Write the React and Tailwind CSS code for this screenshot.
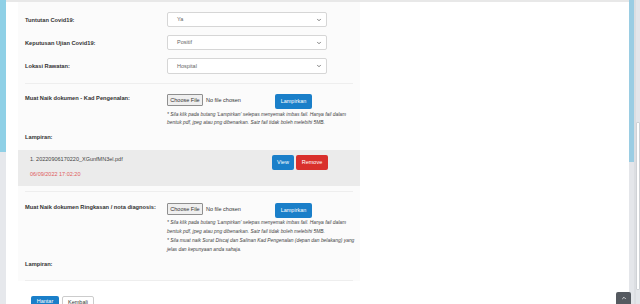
import { ChevronDown, ChevronUp } from 'lucide-react';

const Select = ({ value, className = '' }) => (
  <div
    className={`flex w-[160px] items-center justify-between rounded-[2px] border border-[#d6d6d6] bg-white pl-[9px] pr-[4px] text-[5.5px] text-[#666] ${className}`}
  >
    <span>{value}</span>
    <ChevronDown size={6} strokeWidth={3} className="text-[#555]" />
  </div>
);

const FileInput = () => (
  <div className="flex w-[108px] items-center gap-[3px] text-[5.5px] text-[#333]">
    <span className="flex h-[12px] w-[36px] items-center justify-center rounded-[1px] border border-[#8f8f8f] bg-[#efefef]">
      Choose File
    </span>
    <span>No file chosen</span>
  </div>
);

const Btn = ({ children, className = '' }) => (
  <span
    className={`flex items-center justify-center rounded-[2px] text-[5.5px] text-white ${className}`}
  >
    {children}
  </span>
);

const Help = ({ lines }) => (
  <div className="mt-[1.5px] whitespace-nowrap text-[4.9px] italic leading-[8.7px] text-[#444]">
    {lines.map((l) => (
      <div key={l}>{l}</div>
    ))}
  </div>
);

const Label = ({ children, className = '' }) => (
  <div className={`w-[142px] shrink-0 text-[5.7px] font-bold leading-[8px] text-[#333] ${className}`}>
    {children}
  </div>
);

const help1 = [
  "* Sila klik pada butang 'Lampirkan' selepas menyemak imbas fail. Hanya fail dalam",
  'bentuk pdf, jpeg atau png dibenarkan. Saiz fail tidak boleh melebihi 5MB.',
];

const help2 = [
  ...help1,
  '* Sila muat naik Surat Discaj dan Salinan Kad Pengenalan (depan dan belakang) yang',
  'jelas dan kepunyaan anda sahaja.',
];

const UploadRow = ({ label, lines }) => (
  <div className="flex">
    <Label>{label}</Label>
    <div>
      <div className="flex h-[15px] items-start">
        <FileInput />
        <Btn className="h-[15px] w-[37px] bg-[#1a7fc9]">Lampirkan</Btn>
      </div>
      <Help lines={lines} />
    </div>
  </div>
);

export default function App() {
  return (
    <div className="relative flex h-[304px] w-[640px] overflow-hidden bg-[#eceef2] font-['Liberation_Sans',Arial,sans-serif]">
      <div className="flex w-[6px] flex-col">
        <div className="h-[152px] bg-[#8fd0e6]" />
        <div className="flex-1 bg-[#e6e8ec]" />
      </div>

      <main className="flex-1 border-t-2 border-[#e8e8e8] bg-white">
        <div className="ml-[12px] w-[342px] bg-[#fbfbfb] px-[7px]">
          <div className="ml-[142px] h-[2px] overflow-hidden">
            <div className="-mt-[7px] whitespace-nowrap text-[4.9px] italic leading-[8.7px] text-[#444]">
              * Sila muat naik salinan keputusan ujian (depan dan belakang) yang jelas
            </div>
          </div>

          <div className="pt-[8px]">
            <div className="mb-[8px] flex items-center">
              <Label>Tuntutan Covid19:</Label>
              <Select value="Ya" className="h-[15px]" />
            </div>
            <div className="mb-[8px] flex items-center">
              <Label>Keputusan Ujian Covid19:</Label>
              <Select value="Positif" className="h-[15px]" />
            </div>
            <div className="flex items-center">
              <Label>Lokasi Rawatan:</Label>
              <Select value="Hospital" className="h-[16px]" />
            </div>
          </div>

          <div className="mt-[9px] border-t border-[#eeeeee]" />

          <div className="mt-[10px]">
            <UploadRow label="Muat Naik dokumen - Kad Pengenalan:" lines={help1} />
          </div>

          <Label className="mt-[5px]">Lampiran:</Label>

          <div className="-mx-[7px] mt-[9px] flex h-[36px] justify-between bg-[#ebebeb] pl-[12px] pr-[32px] pt-[5px]">
            <div className="text-[5.5px] leading-[8px]">
              <div className="text-[#444]">1. 20220906170220_XGunfMN3el.pdf</div>
              <div className="mt-[7px] text-[#e05a5a]">06/09/2022 17:02:20</div>
            </div>
            <div className="flex items-start gap-[2px]">
              <Btn className="h-[15px] w-[22px] bg-[#1a7fc9]">View</Btn>
              <Btn className="h-[15px] w-[32px] bg-[#d9302c]">Remove</Btn>
            </div>
          </div>

          <div className="mt-[5px] border-t border-[#eeeeee]" />

          <div className="mt-[11px]">
            <UploadRow label="Muat Naik dokumen Ringkasan / nota diagnosis:" lines={help2} />
          </div>

          <Label className="mt-[6px]">Lampiran:</Label>

          <div className="mt-[12px] border-t border-[#eeeeee]" />
        </div>

        <div className="ml-[18px] mt-[15px] flex gap-[3px] px-[7px]">
          <span className="flex h-[16px] w-[28px] items-start justify-center rounded-[2px] bg-[#1a7fc9] pt-[1px] text-[5.5px] leading-[8px] text-white">
            Hantar
          </span>
          <span className="flex h-[16px] w-[32px] items-start justify-center rounded-[2px] border border-[#cccccc] bg-white pt-[1px] text-[5.5px] leading-[8px] text-[#333]">
            Kembali
          </span>
        </div>
      </main>

      <div className="flex w-[11px]">
        <div className="flex w-[5px] flex-col">
          <div className="h-[162px] bg-[#9acde3]" />
          <div className="flex-1 bg-[#e4e6ea]" />
        </div>
        <div className="w-[2px] bg-[#dcdee2]" />
        <div className="flex w-[4px] flex-col bg-[#e4e6ea] pb-[14px] pt-[122px]">
          <div className="flex-1 rounded-[1px] border border-[#cfd2d6] bg-white" />
        </div>
      </div>

      <div className="absolute bottom-0 right-[9px] flex h-[12px] w-[15px] items-center justify-center rounded-t-[2px] bg-[#555a60]">
        <ChevronUp size={6} strokeWidth={3} className="text-white" />
      </div>
    </div>
  );
}
